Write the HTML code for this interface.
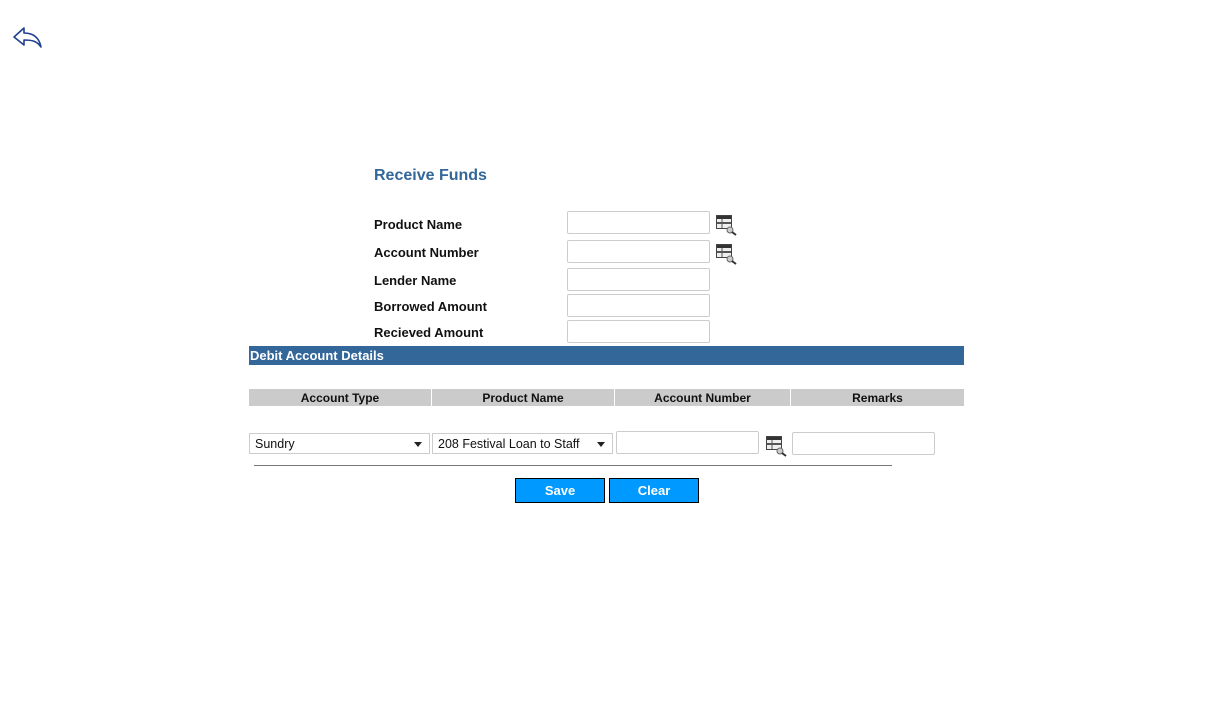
<!DOCTYPE html>
<html><head><meta charset="utf-8"><style>
body{margin:0;width:1213px;height:719px;background:#fff;font-family:"Liberation Sans",Arial,sans-serif;position:relative;overflow:hidden}
.a{position:absolute}
.lbl{position:absolute;left:374px;font-size:13px;font-weight:bold;color:#111}
.inp{position:absolute;left:567px;height:21px;border:1px solid #ccc;border-radius:2px;box-sizing:border-box;width:143px;background:#fff}
.hd{position:absolute;top:389px;height:17px;background:#cbcbcb;font-size:12px;font-weight:bold;text-align:center;line-height:18px;color:#111}
.sel{position:absolute;top:433px;height:21px;border:1px solid #ccc;box-sizing:border-box;font-size:12.5px;line-height:21px;padding-left:5px;color:#111}
.sel:after{content:"";position:absolute;right:7px;top:8px;border-left:4px solid transparent;border-right:4px solid transparent;border-top:5px solid #222}
.btn{position:absolute;top:478px;width:90px;height:25px;box-sizing:border-box;border:1px solid #000;background:#0099ff;color:#fff;font-weight:bold;font-size:13px;text-align:center;line-height:23px}
</style></head><body>
<svg class="a" style="left:11px;top:25px" width="32" height="24" viewBox="0 0 32 24"><path d="M3 12 L13 3 L13 8 C22 8 28 12 30 22 C26 16 21 15 13 15 L13 20 Z" fill="none" stroke="#1f3f8f" stroke-width="1.6" stroke-linejoin="round"/></svg>
<div class="a" style="left:374px;top:167px;font-size:16px;font-weight:bold;color:#336699">Receive Funds</div>
<div class="lbl" style="top:217px">Product Name</div>
<div class="lbl" style="top:245px">Account Number</div>
<div class="lbl" style="top:273px">Lender Name</div>
<div class="lbl" style="top:299px">Borrowed Amount</div>
<div class="lbl" style="top:325px">Recieved Amount</div>
<div class="inp" style="top:211px;height:23px"></div>
<div class="inp" style="top:240px;height:23px"></div>
<div class="inp" style="top:268px;height:23px"></div>
<div class="inp" style="top:294px;height:23px"></div>
<div class="inp" style="top:320px;height:23px"></div>
<svg class="a" style="left:716px;top:215px" width="21" height="21" viewBox="0 0 21 21"><rect x="0.5" y="0.5" width="15" height="13" fill="#eee" stroke="#444"/><rect x="1" y="1" width="14" height="3" fill="#333"/><rect x="1" y="7" width="14" height="2" fill="#555"/><line x1="6" y1="4" x2="6" y2="13" stroke="#555"/><circle cx="14" cy="15" r="3" fill="#ccc" stroke="#666"/><line x1="16" y1="17" x2="20" y2="20" stroke="#333" stroke-width="2"/></svg>
<svg class="a" style="left:716px;top:244px" width="21" height="21" viewBox="0 0 21 21"><rect x="0.5" y="0.5" width="15" height="13" fill="#eee" stroke="#444"/><rect x="1" y="1" width="14" height="3" fill="#333"/><rect x="1" y="7" width="14" height="2" fill="#555"/><line x1="6" y1="4" x2="6" y2="13" stroke="#555"/><circle cx="14" cy="15" r="3" fill="#ccc" stroke="#666"/><line x1="16" y1="17" x2="20" y2="20" stroke="#333" stroke-width="2"/></svg>
<div class="a" style="left:249px;top:346px;width:715px;height:19px;background:#336699;color:#fff;font-size:13px;font-weight:bold;line-height:19px;padding-left:1px;box-sizing:border-box">Debit Account Details</div>
<div class="hd" style="left:249px;width:182px">Account Type</div>
<div class="hd" style="left:432px;width:182px">Product Name</div>
<div class="hd" style="left:615px;width:175px">Account Number</div>
<div class="hd" style="left:791px;width:173px">Remarks</div>
<div class="sel" style="left:249px;width:181px">Sundry</div>
<div class="sel" style="left:432px;width:181px">208 Festival Loan to Staff</div>
<div class="inp" style="left:616px;top:431px;width:143px;height:23px"></div>
<svg class="a" style="left:766px;top:436px" width="21" height="21" viewBox="0 0 21 21"><rect x="0.5" y="0.5" width="15" height="13" fill="#eee" stroke="#444"/><rect x="1" y="1" width="14" height="3" fill="#333"/><rect x="1" y="7" width="14" height="2" fill="#555"/><line x1="6" y1="4" x2="6" y2="13" stroke="#555"/><circle cx="14" cy="15" r="3" fill="#ccc" stroke="#666"/><line x1="16" y1="17" x2="20" y2="20" stroke="#333" stroke-width="2"/></svg>
<div class="inp" style="left:792px;top:432px;width:143px;height:23px"></div>
<div class="a" style="left:254px;top:465px;width:638px;height:1px;background:#777"></div>
<div class="btn" style="left:515px">Save</div>
<div class="btn" style="left:609px">Clear</div>
</body></html>
